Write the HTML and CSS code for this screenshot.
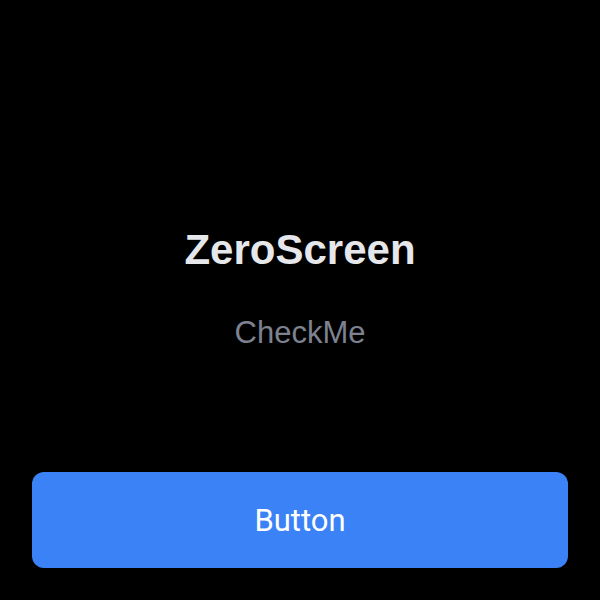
FILE: index.html
```html
<!DOCTYPE html>
<html>
<head>
<meta charset="utf-8">
<link rel="stylesheet" href="styles.css">
</head>
<body>
<div class="screen">
  <div class="content">
    <h1 class="title">ZeroScreen</h1>
    <p class="subtitle">CheckMe</p>
  </div>
  <button class="btn">Button</button>
</div>
</body>
</html>
```
FILE: styles.css
```css
html, body {
  margin: 0;
  padding: 0;
  background: #000;
}
.screen {
  width: 600px;
  height: 600px;
  box-sizing: border-box;
  padding: 0 32px 32px;
  display: flex;
  flex-direction: column;
}
.content {
  flex: 1;
  display: flex;
  flex-direction: column;
  align-items: center;
  justify-content: center;
  padding-top: 105px;
}
.title {
  margin: 0;
  font-family: "Liberation Sans", Arial, sans-serif;
  font-weight: 700;
  font-size: 42px;
  line-height: 48px;
  color: #e5e7eb;
}
.subtitle {
  margin: 41px 0 0;
  font-family: "Liberation Sans", Arial, sans-serif;
  font-size: 31px;
  line-height: 36px;
  color: #7d8290;
}
.btn {
  height: 96px;
  border: none;
  border-radius: 12px;
  background: #3b82f6;
  color: #fff;
  font-family: Roboto, "Liberation Sans", sans-serif;
  font-size: 31px;
  padding-top: 2px;
}
```
